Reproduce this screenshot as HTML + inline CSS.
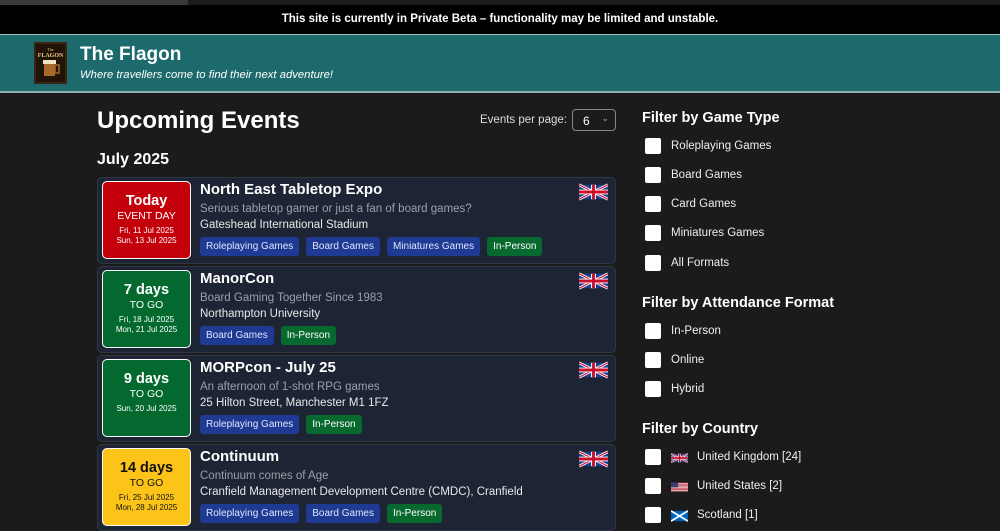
<!DOCTYPE html>
<html><head><meta charset="utf-8"><style>
*{box-sizing:border-box;margin:0;padding:0}
body{width:1000px;height:531px;overflow:hidden;background:#1b1b1b;font-family:"Liberation Sans",sans-serif;color:#fff;position:relative}
.abs{position:absolute}
.tip{left:0;top:0;width:188px;height:5px;background:#3a3a3a}
.beta{left:0;top:5px;width:1000px;height:29px;background:#000;text-align:center;font-size:11.5px;font-weight:bold;line-height:28px}
.hdr{left:0;top:34px;width:1000px;height:59px;background:#1d6a6c;border-top:1px solid #9fbcbc;border-bottom:2px solid #8fb0b0}
.title{left:80px;top:44px;font-size:19px;font-weight:bold}
.tag{left:80px;top:69px;font-size:11.3px;font-style:italic}
h1{position:absolute;left:97px;top:107px;font-size:24px;font-weight:bold}
.month{left:97px;top:151px;font-size:16px;font-weight:bold}
.epp{left:480px;top:114px;font-size:11.5px;color:#ddd}
.sel{left:572px;top:109px;width:44px;height:22px;border:1px solid #888;border-radius:4px;background:#1b1b1b;font-size:12px;padding:4px 0 0 10px}
.card{position:absolute;left:97px;width:519px;height:87px;background:#1d2535;border:1px solid #2f3747;border-radius:5px}
.st{position:absolute;left:4px;top:3px;width:89px;height:78px;border:1px solid #fff;border-radius:5px;text-align:center}
.st b{display:block;font-size:14.5px;margin-top:11px}
.st i{display:block;font-style:normal;font-size:10.5px;margin-top:1px}
.st s{display:block;text-decoration:none;font-size:8px;margin-top:4px;line-height:10px}
.nm{position:absolute;left:102px;top:3px;font-size:15px;font-weight:bold}
.ds{position:absolute;left:102px;top:25px;font-size:11.5px;color:#9aa0a8}
.lc{position:absolute;left:102px;top:41px;font-size:11.5px;color:#e8e8e8}
.tags{position:absolute;left:102px;top:59px;display:flex;gap:7px}
.tags span{font-size:10px;padding:4px 6px;border-radius:3px;background:#1f3a93;color:#e0e6ff}
.tags span.g{background:#08692f;color:#fff}
.fl{position:absolute;right:7px;top:3px}
.fh{position:absolute;left:642px;font-size:14.5px;font-weight:bold}
.cb{position:absolute;left:645px;width:16px;height:16px;background:#fff;border-radius:2px}
.lb{position:absolute;font-size:11.5px;color:#eee}
</style></head><body>
<svg width="0" height="0" style="position:absolute">
<defs>
<symbol id="uk" viewBox="0 0 60 30"><rect width="60" height="30" fill="#1b3f8f"/><path d="M0,0 60,30M60,0 0,30" stroke="#fff" stroke-width="6"/><path d="M0,0 60,30M60,0 0,30" stroke="#c8102e" stroke-width="2.5"/><path d="M30,0v30M0,15h60" stroke="#fff" stroke-width="10"/><path d="M30,0v30M0,15h60" stroke="#c8102e" stroke-width="6"/></symbol>
<symbol id="us" viewBox="0 0 19 10"><rect width="19" height="10" fill="#fff"/><path d="M0,.4h19M0,1.9h19M0,3.4h19M0,4.9h19M0,6.4h19M0,7.9h19M0,9.4h19" stroke="#b22234" stroke-width=".8"/><rect width="8" height="5.4" fill="#3c3b6e"/></symbol>
<symbol id="sc" viewBox="0 0 20 12"><rect width="20" height="12" fill="#0065bd"/><path d="M0,0 20,12M20,0 0,12" stroke="#fff" stroke-width="2"/></symbol>
</defs></svg>
<div class="abs tip"></div>
<div class="abs beta">This site is currently in Private Beta – functionality may be limited and unstable.</div>
<div class="abs hdr"></div>
<svg class="abs" style="left:34px;top:42px" width="33" height="42"><rect width="33" height="42" fill="#3a2414"/><rect x="2" y="2" width="29" height="38" fill="#221309"/><text x="16.5" y="9" font-size="4" fill="#e9c98a" text-anchor="middle" font-family="Liberation Serif">The</text><text x="16.5" y="15" font-size="6" fill="#e9c98a" text-anchor="middle" font-family="Liberation Serif" font-weight="bold">FLAGON</text><rect x="10" y="20" width="11" height="14" fill="#a8692a"/><rect x="9" y="18" width="13" height="4" fill="#f2e4c0"/><rect x="21" y="23" width="4" height="8" fill="none" stroke="#a8692a" stroke-width="1.5"/></svg>
<div class="abs title">The Flagon</div>
<div class="abs tag">Where travellers come to find their next adventure!</div>
<h1>Upcoming Events</h1>
<div class="abs epp">Events per page:</div>
<div class="abs sel">6<span style="position:absolute;right:6px;top:3px;font-size:9px;color:#aaa">&#8964;</span></div>
<div class="abs month">July 2025</div>

<div class="card" style="top:177px"><div class="st" style="background:#c4000b"><b>Today</b><i>EVENT DAY</i><s>Fri, 11 Jul 2025<br>Sun, 13 Jul 2025</s></div>
<div class="nm">North East Tabletop Expo</div><div class="ds">Serious tabletop gamer or just a fan of board games?</div><div class="lc">Gateshead International Stadium</div>
<div class="tags"><span>Roleplaying Games</span><span>Board Games</span><span>Miniatures Games</span><span class="g">In-Person</span></div>
<svg class="fl" width="29" height="22"><use href="#uk" width="29" height="22" preserveAspectRatio="none"/></svg></div>

<div class="card" style="top:266px"><div class="st" style="background:#04692f"><b>7 days</b><i>TO GO</i><s>Fri, 18 Jul 2025<br>Mon, 21 Jul 2025</s></div>
<div class="nm">ManorCon</div><div class="ds">Board Gaming Together Since 1983</div><div class="lc">Northampton University</div>
<div class="tags"><span>Board Games</span><span class="g">In-Person</span></div>
<svg class="fl" width="29" height="22"><use href="#uk" width="29" height="22" preserveAspectRatio="none"/></svg></div>

<div class="card" style="top:355px"><div class="st" style="background:#04692f"><b>9 days</b><i>TO GO</i><s>Sun, 20 Jul 2025</s></div>
<div class="nm">MORPcon - July 25</div><div class="ds">An afternoon of 1-shot RPG games</div><div class="lc">25 Hilton Street, Manchester M1 1FZ</div>
<div class="tags"><span>Roleplaying Games</span><span class="g">In-Person</span></div>
<svg class="fl" width="29" height="22"><use href="#uk" width="29" height="22" preserveAspectRatio="none"/></svg></div>

<div class="card" style="top:444px"><div class="st" style="background:#fcc419;color:#111"><b>14 days</b><i>TO GO</i><s>Fri, 25 Jul 2025<br>Mon, 28 Jul 2025</s></div>
<div class="nm">Continuum</div><div class="ds">Continuum comes of Age</div><div class="lc">Cranfield Management Development Centre (CMDC), Cranfield</div>
<div class="tags"><span>Roleplaying Games</span><span>Board Games</span><span class="g">In-Person</span></div>
<svg class="fl" width="29" height="22"><use href="#uk" width="29" height="22" preserveAspectRatio="none"/></svg></div>

<div class="fh" style="top:110px">Filter by Game Type</div>
<div class="cb" style="top:138px"></div><div class="lb" style="left:671px;top:140px">Roleplaying Games</div>
<div class="cb" style="top:167px"></div><div class="lb" style="left:671px;top:169px">Board Games</div>
<div class="cb" style="top:196px"></div><div class="lb" style="left:671px;top:198px">Card Games</div>
<div class="cb" style="top:225px"></div><div class="lb" style="left:671px;top:227px">Miniatures Games</div>
<div class="cb" style="top:255px"></div><div class="lb" style="left:671px;top:257px">All Formats</div>
<div class="fh" style="top:295px">Filter by Attendance Format</div>
<div class="cb" style="top:323px"></div><div class="lb" style="left:671px;top:325px">In-Person</div>
<div class="cb" style="top:352px"></div><div class="lb" style="left:671px;top:354px">Online</div>
<div class="cb" style="top:381px"></div><div class="lb" style="left:671px;top:383px">Hybrid</div>
<div class="fh" style="top:421px">Filter by Country</div>
<div class="cb" style="top:449px"></div><svg class="abs" style="left:671px;top:452px" width="17" height="12"><use href="#uk" width="17" height="12" preserveAspectRatio="none"/></svg><div class="lb" style="left:697px;top:451px">United Kingdom [24]</div>
<div class="cb" style="top:478px"></div><svg class="abs" style="left:671px;top:481px" width="17" height="12"><use href="#us" width="17" height="12" preserveAspectRatio="none"/></svg><div class="lb" style="left:697px;top:480px">United States [2]</div>
<div class="cb" style="top:507px"></div><svg class="abs" style="left:671px;top:510px" width="17" height="12"><use href="#sc" width="17" height="12" preserveAspectRatio="none"/></svg><div class="lb" style="left:697px;top:509px">Scotland [1]</div>
</body></html>
